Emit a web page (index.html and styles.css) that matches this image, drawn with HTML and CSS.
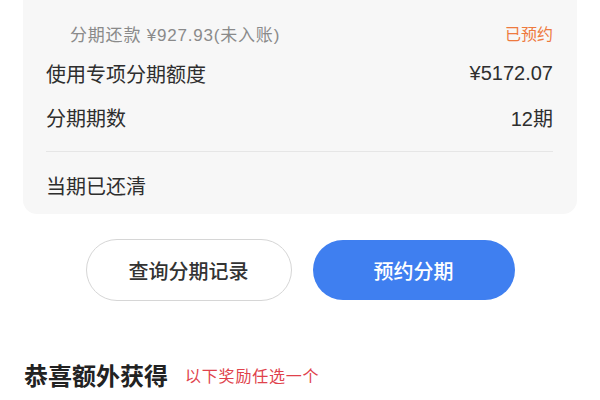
FILE: index.html
```html
<!DOCTYPE html>
<html lang="zh-CN">
<head>
<meta charset="utf-8">
<link rel="stylesheet" href="styles.css">
</head>
<body>
<div class="page">
  <section class="card">
    <div class="sub-row">
      <span class="sub-label">分期还款 ¥927.93(未入账)</span>
      <span class="sub-status">已预约</span>
    </div>
    <div class="row">
      <span>使用专项分期额度</span>
      <span>¥5172.07</span>
    </div>
    <div class="row">
      <span>分期期数</span>
      <span>12期</span>
    </div>
    <div class="divider"></div>
    <div class="row status-row">
      <span>当期已还清</span>
    </div>
  </section>
  <div class="actions">
    <button class="btn btn-outline">查询分期记录</button>
    <button class="btn btn-primary">预约分期</button>
  </div>
  <div class="reward-head">
    <h2 class="reward-title">恭喜额外获得</h2>
    <span class="reward-note">以下奖励任选一个</span>
  </div>
</div>
</body>
</html>
```

FILE: styles.css
```css
* { box-sizing: border-box; }
html {
  overflow: hidden;
}
html, body {
  margin: 0;
  padding: 0;
  background: #ffffff;
  font-family: "Liberation Sans", "Noto Sans CJK SC", sans-serif;
  color: #333333;
}
.page {
  width: 600px;
  padding: 0 23px;
}
.card {
  margin-top: -20px;
  background: #f7f7f7;
  border-radius: 14px;
  padding: 32px 24px 6px 23px;
}
.sub-row {
  display: flex;
  justify-content: space-between;
  align-items: center;
  height: 42px;
  padding-left: 24px;
  font-size: 16px;
}
.sub-label {
  color: #8a8a8a;
  font-size: 17px;
  letter-spacing: 0.8px;
}
.sub-status { color: #ee7a3e; }
.row {
  display: flex;
  justify-content: space-between;
  align-items: center;
  height: 44px;
  font-size: 20px;
  color: #2e2e2e;
}
.sub-row + .row { margin-top: -3px; }
.divider {
  height: 1px;
  background: #e6e6e6;
  margin: 12px 0 10px;
}
.status-row { height: 46px; }
.actions {
  display: flex;
  justify-content: center;
  gap: 21px;
  margin-top: 25px;
}
.btn {
  height: 62px;
  border-radius: 31px;
  font-family: inherit;
  font-size: 20px;
  font-weight: 500;
}
.btn-outline {
  width: 206px;
  background: #ffffff;
  border: 1.5px solid #d6d6d6;
  color: #333333;
}
.btn-primary {
  width: 202px;
  height: 60px;
  margin-top: 1px;
  background: #3f7ff0;
  border: none;
  color: #ffffff;
}
.reward-head {
  display: flex;
  align-items: center;
  gap: 17px;
  margin-top: 56px;
  padding-left: 1px;
}
.reward-title {
  margin: 0;
  font-size: 24px;
  font-weight: 700;
  color: #222222;
}
.reward-note {
  font-size: 16px;
  letter-spacing: 0.8px;
  color: #e0424c;
}
```
